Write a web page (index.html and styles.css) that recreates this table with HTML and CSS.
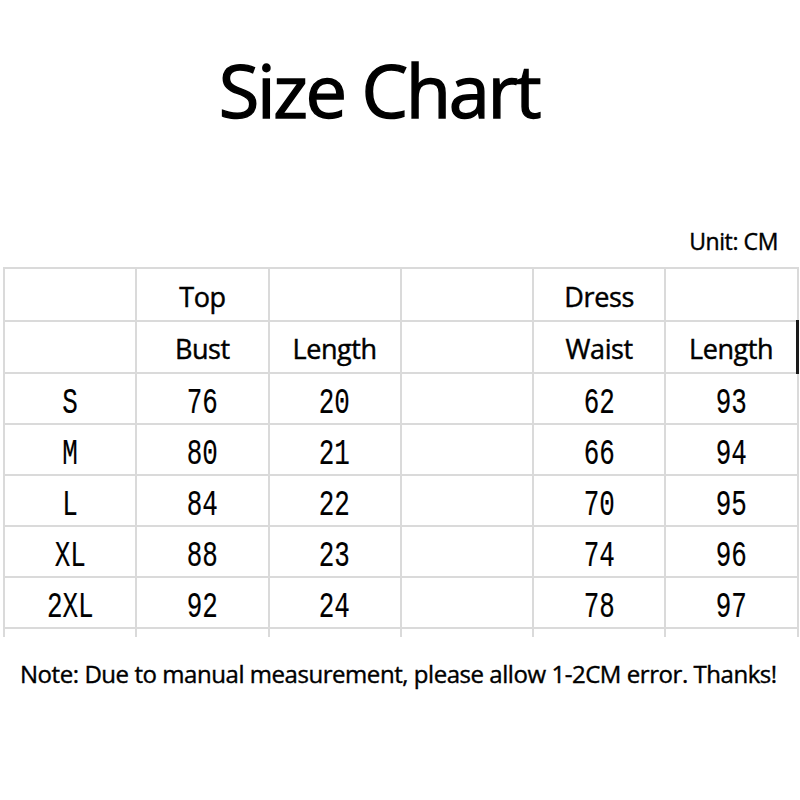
FILE: index.html
```html
<!DOCTYPE html>
<html>
<head>
<meta charset="utf-8">
<link rel="stylesheet" href="styles.css">
</head>
<body>
<div class="page">
  <h1 class="title">Size Chart</h1>
  <div class="unit">Unit: CM</div>
  <table class="chart">
    <tr class="hrow1">
      <td></td><td class="h">Top</td><td></td><td></td><td class="h">Dress</td><td></td>
    </tr>
    <tr class="hrow2">
      <td></td><td class="h">Bust</td><td class="h">Length</td><td></td><td class="h">Waist</td><td class="h last">Length</td>
    </tr>
    <tr><td><span class="d">S</span></td><td><span class="d">76</span></td><td><span class="d">20</span></td><td></td><td><span class="d">62</span></td><td><span class="d">93</span></td></tr>
    <tr><td><span class="d">M</span></td><td><span class="d">80</span></td><td><span class="d">21</span></td><td></td><td><span class="d">66</span></td><td><span class="d">94</span></td></tr>
    <tr><td><span class="d">L</span></td><td><span class="d">84</span></td><td><span class="d">22</span></td><td></td><td><span class="d">70</span></td><td><span class="d">95</span></td></tr>
    <tr><td><span class="d">XL</span></td><td><span class="d">88</span></td><td><span class="d">23</span></td><td></td><td><span class="d">74</span></td><td><span class="d">96</span></td></tr>
    <tr><td><span class="d">2XL</span></td><td><span class="d">92</span></td><td><span class="d">24</span></td><td></td><td><span class="d">78</span></td><td><span class="d">97</span></td></tr>
    <tr class="stub"><td></td><td></td><td></td><td></td><td></td><td></td></tr>
  </table>
  <p class="note">Note: Due to manual measurement, please allow 1-2CM error. Thanks!</p>
</div>
</body>
</html>
```
FILE: styles.css
```css
html, body {
  margin: 0;
  padding: 0;
  background: #ffffff;
}
.page {
  width: 800px;
  height: 800px;
  overflow: hidden;
  font-family: "Open Sans", "Noto Sans", sans-serif;
  color: #000;
}
.title {
  margin: 0;
  padding-top: 40px;
  height: 120px;
  box-sizing: content-box;
  text-align: center;
  padding-right: 42px;
  font-size: 74px;
  font-weight: 400;
  line-height: 100px;
  letter-spacing: -2.4px;
  -webkit-text-stroke: 1.4px #000;
}
.unit {
  margin-top: 66px;
  text-align: right;
  padding-right: 22px;
  font-size: 23px;
  line-height: 30px;
  letter-spacing: -0.4px;
  height: 30px;
  -webkit-text-stroke: 0.4px #000;
}
.chart {
  margin: 11px 0 0 3px;
  width: 796px;
  border-collapse: collapse;
  table-layout: fixed;
}
.chart td {
  border: 2px solid #dadada;
  text-align: center;
  height: 49px;
  padding: 0;
  vertical-align: middle;
}
.chart .hrow1 td {
  height: 47px;
  padding-top: 4px;
}
.chart .hrow2 td {
  height: 46px;
  padding-top: 4px;
}
.chart td.h {
  font-size: 27px;
  letter-spacing: -0.4px;
  line-height: 34px;
  -webkit-text-stroke: 0.45px #000;
}
.chart td.last {
  border-right: 3px solid #1a1a1a;
}
.chart .stub td {
  height: 8px;
  border-bottom: none;
}
.d {
  display: inline-block;
  font-family: "Liberation Mono", "DejaVu Sans Mono", monospace;
  font-size: 37px;
  line-height: 40px;
  transform: scaleX(0.7);
  padding-top: 9px;
  -webkit-text-stroke: 0.2px #000;
}
.note {
  margin: 21px 0 0 0;
  padding-left: 20px;
  font-size: 24px;
  letter-spacing: -0.45px;
  line-height: 32px;
  -webkit-text-stroke: 0.4px #000;
}
```
